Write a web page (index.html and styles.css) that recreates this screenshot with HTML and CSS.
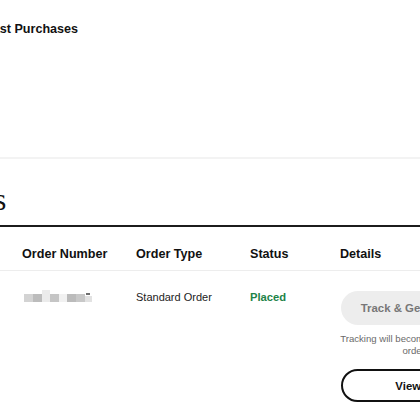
FILE: index.html
```html
<!DOCTYPE html>
<html>
<head>
<meta charset="utf-8">
<link rel="stylesheet" href="styles.css">
</head>
<body>
<div class="page">
  <section class="last">
    <h2 class="last-title">Last Purchases</h2>
  </section>
  <section class="orders">
    <h1 class="orders-title">Orders</h1>
    <div class="table">
      <div class="row head">
        <div class="cell">Order Number</div>
        <div class="cell">Order Type</div>
        <div class="cell">Status</div>
        <div class="cell">Details</div>
      </div>
      <div class="row body">
        <div class="cell">
          <svg class="blur" width="72" height="14" viewBox="0 0 72 14">
            <rect x="0" y="4" width="9" height="8" fill="#d3d3d3"/>
            <rect x="9" y="4" width="9" height="8" fill="#bcbcbc"/>
            <rect x="18" y="0" width="8" height="12" fill="#ebebeb"/>
            <rect x="26" y="4" width="9" height="8" fill="#c5c5c5"/>
            <rect x="35" y="4" width="8" height="8" fill="#f1f1f1"/>
            <rect x="43" y="4" width="9" height="8" fill="#bbbbbb"/>
            <rect x="52" y="4" width="9" height="8" fill="#c8c8c8"/>
            <rect x="61" y="6" width="7" height="6" fill="#e2e2e2"/>
            <rect x="62" y="3" width="4" height="2" fill="#6e6e6e"/>
          </svg>
        </div>
        <div class="cell type">Standard Order</div>
        <div class="cell status">Placed</div>
        <div class="cell details">
          <button class="btn track">Track &amp; Get Notifications</button>
          <p class="note">Tracking will become available once your order ships.</p>
          <button class="btn view">View Details</button>
        </div>
      </div>
    </div>
  </section>
</div>
</body>
</html>
```
FILE: styles.css
```css
html, body {
  margin: 0;
  padding: 0;
  background: #fff;
  overflow: hidden;
}
body {
  font-family: "Liberation Sans", Arial, sans-serif;
  color: #111;
}
.page {
  width: 420px;
}
.last {
  box-sizing: border-box;
  height: 159px;
  padding-top: 22px;
  border-bottom: 2px solid #f3f3f3;
}
.last-title {
  margin: 0 0 0 -15px;
  font-size: 12.6px;
  line-height: 15px;
  font-weight: 700;
  white-space: nowrap;
}
.orders-title {
  margin: 23px 0 8px -78px;
  font-family: "Liberation Serif", "Times New Roman", serif;
  font-weight: 400;
  font-size: 31px;
  line-height: 35px;
  white-space: nowrap;
}
.table {
  border-top: 2px solid #1c1c1c;
  width: 560px;
}
.row {
  display: grid;
  grid-template-columns: 114px 114px 90px 175px;
  padding-left: 22px;
}
.row.head {
  padding-top: 20px;
  padding-bottom: 8px;
  border-bottom: 1px solid #ededed;
  font-size: 12.6px;
  line-height: 15px;
  font-weight: 700;
}
.row.body {
  padding-top: 20px;
  font-size: 11px;
  line-height: 13px;
}
.blur {
  display: block;
  margin: -1px 0 0 2px;
}
.type {
  color: #222;
}
.status {
  color: #1d8348;
  font-weight: 700;
  font-size: 11.2px;
}
.details {
  display: flex;
  flex-direction: column;
  margin-left: 1px;
}
.btn {
  display: block;
  box-sizing: border-box;
  width: 175px;
  border-radius: 17px;
  font-family: "Liberation Sans", Arial, sans-serif;
  font-size: 11.4px;
  font-weight: 700;
  text-align: center;
  white-space: nowrap;
  padding: 0;
}
.track {
  height: 34px;
  background: #ededed;
  border: none;
  color: #777;
}
.note {
  margin: 8px 0 0 -1px;
  width: 175px;
  font-size: 9.6px;
  line-height: 12px;
  color: #6a6a6a;
  text-align: center;
}
.view {
  margin-top: 12px;
  height: 33px;
  background: #fff;
  border: 2px solid #111;
  color: #111;
}
```
